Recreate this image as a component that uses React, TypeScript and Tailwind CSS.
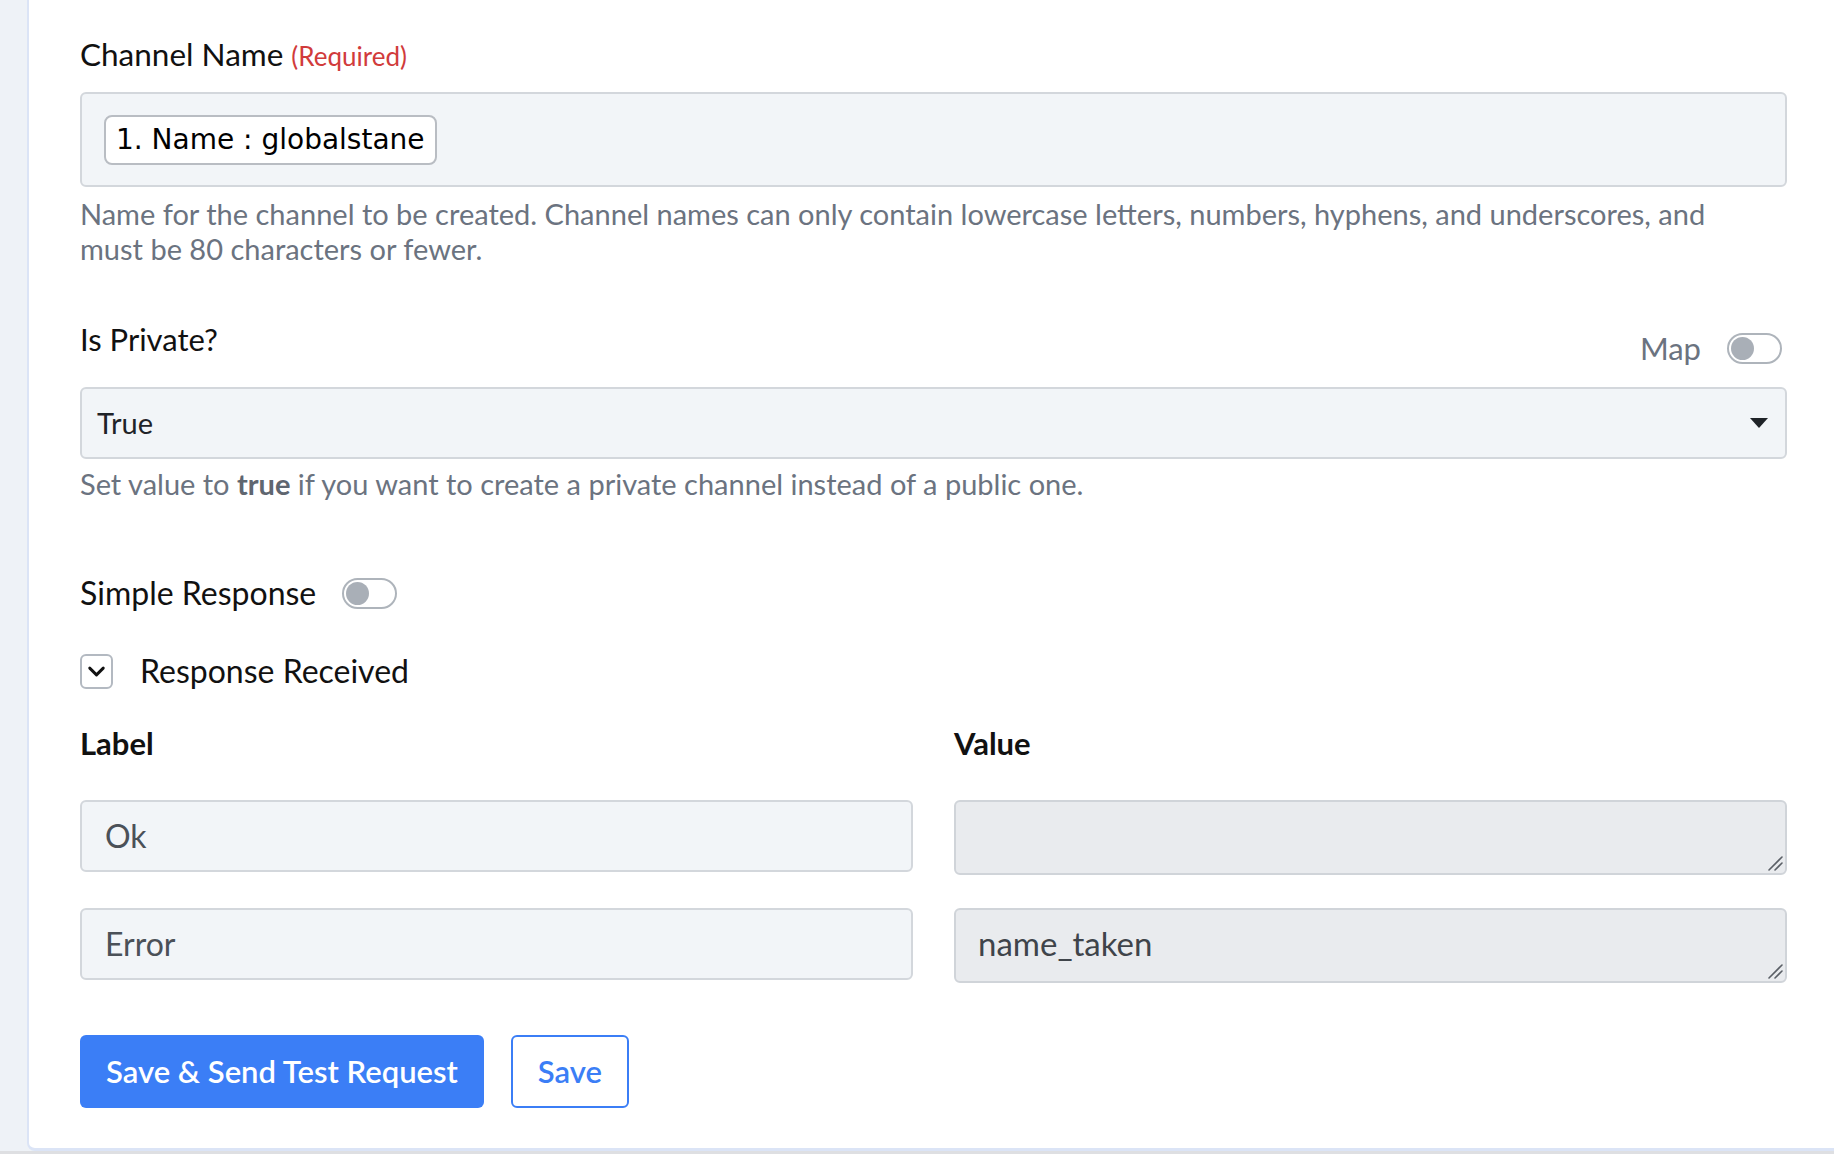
import { ChevronDown } from 'lucide-react'

const font = { fontFamily: 'Lato, "Noto Sans", sans-serif' }

// Small pill switch used for "Map" and "Simple Response"
function Toggle() {
  return (
    <div className="w-[55px] h-[31px] rounded-full border-2 border-[#aeb4bb] bg-white flex items-center px-[2px] shrink-0">
      <div className="w-[23px] h-[23px] rounded-full bg-[#a9afb7]" />
    </div>
  )
}

function TextInput({ value }: { value: string }) {
  return (
    <div className="h-[72px] rounded-md border-2 border-[#d3d7dc] bg-[#f2f5f8] flex items-center px-[23px] text-[32px] text-[#4b5158]">
      {value}
    </div>
  )
}

// Read-only textarea with a drawn grip in the corner
function ValueArea({ value }: { value: string }) {
  return (
    <div className="relative">
      <textarea
        readOnly
        defaultValue={value}
        className="block w-full h-[75px] rounded-md border-2 border-[#d0d4d9] bg-[#e9ebee] px-[22px] pt-[13px] text-[33px] leading-[40px] text-[#3f444a] outline-none resize-none"
        style={font}
      />
      <svg className="absolute right-[4px] bottom-[4px]" width="15" height="15" viewBox="0 0 15 15">
        <path d="M1 14 L14 1 M7 14 L14 7" stroke="#5a5f66" strokeWidth="1.6" strokeLinecap="round" />
      </svg>
    </div>
  )
}

export default function App() {
  return (
    <div className="w-[1834px] h-[1154px] bg-[#eef2f7] overflow-hidden flex flex-col" style={font}>
      <div className="flex-1 flex pl-[27px]">
        <div className="flex-1 bg-white rounded-bl-lg border-l-2 border-b-[3px] border-[#dbe4f6] pl-[51px] pr-[47px] pt-[36px]">
          {/* Channel name */}
          <div className="flex items-baseline gap-[8px] h-[36px] leading-[36px]">
            <span className="text-[31.5px] text-[#111]">Channel Name</span>
            <span className="text-[26px] text-[#d13b3b]">(Required)</span>
          </div>
          <div className="mt-[20px] h-[95px] rounded-md border-2 border-[#d3d7dc] bg-[#f2f5f8] flex items-center px-[22px]">
            <span
              className="h-[50px] rounded-lg border-2 border-[#b9bdc3] bg-white flex items-center px-[10px] text-black"
              style={{ fontFamily: '"DejaVu Sans", sans-serif', fontSize: '28px' }}
            >
              1. Name : globalstane
            </span>
          </div>
          <p className="mt-[9px] text-[29px] leading-[35px] text-[#6b7380]">
            Name for the channel to be created. Channel names can only contain lowercase letters, numbers, hyphens, and underscores, and
            <br />
            must be 80 characters or fewer.
          </p>

          {/* Is private */}
          <div className="mt-[55px] flex justify-between h-[45px]">
            <span className="self-start text-[31px] text-[#111] leading-[36px]">Is Private?</span>
            <div className="self-end flex items-center gap-[26px] pr-[5px]">
              <span className="text-[31px] text-[#6b7380] leading-[36px]">Map</span>
              <Toggle />
            </div>
          </div>
          <div className="mt-[21px] h-[72px] rounded-md border-2 border-[#d3d7dc] bg-[#f2f5f8] flex items-center justify-between pl-[15px] pr-[17px]">
            <span className="text-[29px] text-[#1f2328]">True</span>
            <svg width="18" height="10" viewBox="0 0 18 10">
              <path d="M0 0 L18 0 L9 10 Z" fill="#1f2328" />
            </svg>
          </div>
          <p className="mt-[7px] text-[29px] leading-[35px] text-[#6b7380]">
            Set value to <span className="font-bold text-[#5f6670]">true</span> if you want to create a private channel instead of a public one.
          </p>

          {/* Simple response */}
          <div className="mt-[74px] flex items-center gap-[26px] h-[36px]">
            <span className="text-[32px] text-[#111]">Simple Response</span>
            <Toggle />
          </div>

          <div className="mt-[43px] flex items-center gap-[27px] h-[34px]">
            <div className="w-[33px] h-[35px] rounded-md border-2 border-[#b3b9c1] flex items-center justify-center">
              <ChevronDown size={27} strokeWidth={2.6} className="text-[#111]" />
            </div>
            <span className="text-[32px] text-[#111]">Response Received</span>
          </div>

          {/* Label / value grid */}
          <div className="mt-[37px] grid grid-cols-2 gap-x-[41px]">
            <div className="text-[31px] font-bold text-[#111] leading-[36px]">Label</div>
            <div className="text-[31px] font-bold text-[#111] leading-[36px]">Value</div>
          </div>
          <div className="mt-[39px] grid grid-cols-2 gap-x-[41px] gap-y-[33px]">
            <TextInput value="Ok" />
            <ValueArea value="" />
            <TextInput value="Error" />
            <ValueArea value="name_taken" />
          </div>

          <div className="mt-[52px] flex items-center gap-[27px]">
            <button className="h-[73px] px-[26px] rounded-md bg-[#3b7ef6] text-white text-[31px] font-semibold">
              Save &amp; Send Test Request
            </button>
            <button className="h-[73px] px-[25px] rounded-md border-2 border-[#3b7ef6] bg-white text-[#3b7ef6] text-[31px] font-semibold">
              Save
            </button>
          </div>
        </div>
      </div>
      <div className="h-[3px] bg-[#dedfe2]" />
    </div>
  )
}
